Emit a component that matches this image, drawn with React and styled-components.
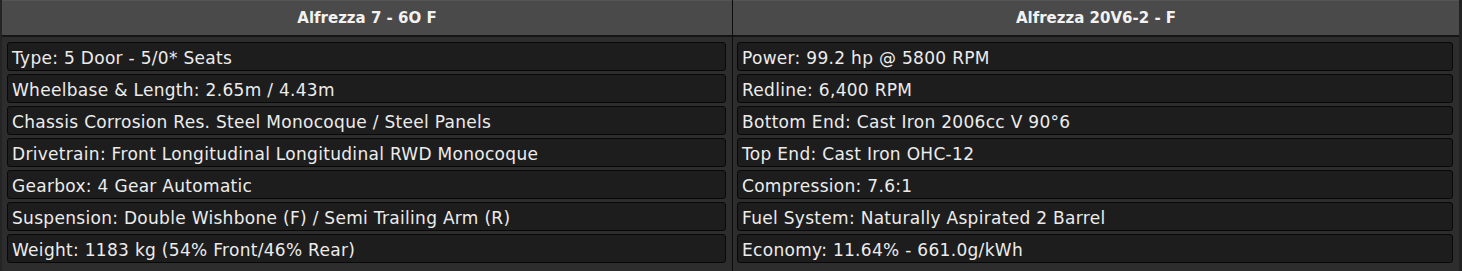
import React from 'react'
import styled, { createGlobalStyle } from 'styled-components'

const GlobalStyle = createGlobalStyle`
  html, body {
    margin: 0;
    padding: 0;
    background: #2d2d2d;
  }
`

const Table = styled.div`
  display: grid;
  grid-template-columns: 730px 1fr;
  width: 1462px;
  height: 271px;
  background: #2d2d2d;
  font-family: "DejaVu Sans", "Liberation Sans", sans-serif;
  box-sizing: border-box;
  border-left: 2px solid #242424;
  border-right: 3px solid #222;
`

const Column = styled.div`
  display: flex;
  flex-direction: column;
  border-left: ${({ $divider }) => ($divider ? '1px solid #0c0c0c' : 'none')};
`

const Header = styled.div`
  display: flex;
  align-items: center;
  justify-content: center;
  background: #4a4a4a;
  border-top: 1px solid #555;
  border-bottom: 2px solid #151515;
  box-sizing: border-box;
  height: 37px;
  color: #f2f2f2;
  font-size: 15px;
  font-weight: 700;
`

const Rows = styled.div`
  display: flex;
  flex-direction: column;
  gap: 3px;
  padding: 5px 6px 0 ${({ $left }) => $left}px;
`

const Row = styled.div`
  height: 29px;
  box-sizing: border-box;
  display: flex;
  align-items: center;
  padding: 2px 4px 0;
  background: #1d1d1d;
  border: 1px solid #080808;
  border-radius: 3px;
  color: #ececec;
  font-size: 17px;
  letter-spacing: 0.3px;
  white-space: nowrap;
`

const car = {
  title: 'Alfrezza 7 - 6O F',
  specs: [
    'Type: 5 Door - 5/0* Seats',
    'Wheelbase & Length: 2.65m / 4.43m',
    'Chassis Corrosion Res. Steel Monocoque / Steel Panels',
    'Drivetrain: Front Longitudinal Longitudinal RWD Monocoque',
    'Gearbox: 4 Gear Automatic',
    'Suspension: Double Wishbone (F) / Semi Trailing Arm (R)',
    'Weight: 1183 kg (54% Front/46% Rear)',
  ],
}

const engine = {
  title: 'Alfrezza 20V6-2 - F',
  specs: [
    'Power: 99.2 hp @ 5800 RPM',
    'Redline:  6,400 RPM',
    'Bottom End: Cast Iron 2006cc V 90°6',
    'Top End: Cast Iron OHC-12',
    'Compression: 7.6:1',
    'Fuel System: Naturally Aspirated 2 Barrel',
    'Economy: 11.64% - 661.0g/kWh',
  ],
}

const SpecColumn = ({ data, divider, left }) => (
  <Column $divider={divider}>
    <Header>{data.title}</Header>
    <Rows $left={left}>
      {data.specs.map((s) => (
        <Row key={s}>{s}</Row>
      ))}
    </Rows>
  </Column>
)

const App = () => (
  <>
    <GlobalStyle />
    <Table>
      <SpecColumn data={car} left={5} />
      <SpecColumn data={engine} divider left={4} />
    </Table>
  </>
)

export default App
